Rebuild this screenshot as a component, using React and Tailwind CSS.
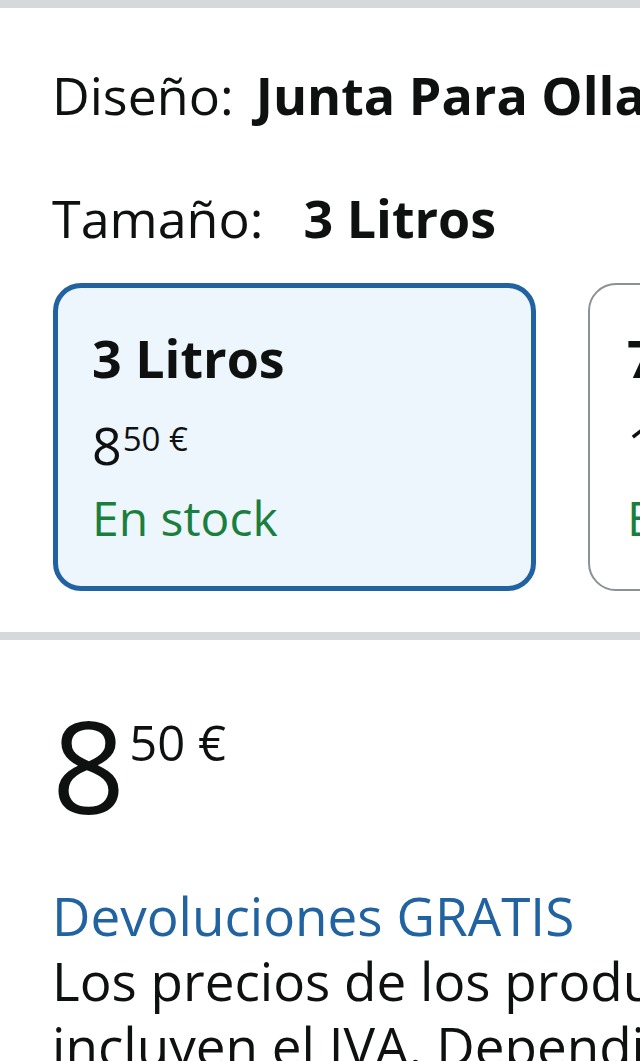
const Price = ({ whole, cents, big }) => {
  if (big) {
    return (
      <div className="flex items-start">
        <span className="text-[128px] leading-[128px]">{whole}</span>
        <span className="mt-[17px] ml-[4px] text-[49px] leading-[48px]">{cents} €</span>
      </div>
    );
  }
  return (
    <div className="flex items-start">
      <span className="text-[52px] leading-[60px]">{whole}</span>
      <span className="ml-[1px] text-[33px] leading-[48px]">{cents} €</span>
    </div>
  );
};

const SizeCard = ({ label, whole, cents, selected }) => (
  <div
    className={
      selected
        ? 'w-[483px] h-[308px] shrink-0 rounded-[28px] border-[5px] border-[#2162a1] bg-[#edf5fd] pl-[34px] pt-[40px]'
        : 'w-[483px] h-[308px] shrink-0 rounded-[28px] border-2 border-[#8d9096] bg-white pl-[37px] pt-[43px]'
    }
  >
    <div className="text-[52px] leading-[60px] font-bold whitespace-nowrap">{label}</div>
    <div className="mt-[27px] font-medium">
      <Price whole={whole} cents={cents} />
    </div>
    <div className="mt-[13px] text-[48px] leading-[60px] font-medium text-[#1a7f3c] whitespace-nowrap">En stock</div>
  </div>
);

export default function App() {
  return (
    <div
      className="w-[640px] h-[1061px] overflow-hidden bg-white text-[#0f1111]"
      style={{ fontFamily: '"Open Sans", "Noto Sans", sans-serif' }}
    >
      <div className="h-2 bg-[#d5d9d9]" />

      <div className="pl-[52px] pt-[57px] pb-[35px]">
        <div className="text-[52px] leading-[60px] font-medium whitespace-nowrap">
          Diseño:
          <span className="ml-[22px] font-bold">Junta Para Ollas Express</span>
        </div>
        <div className="mt-[63px] text-[52px] leading-[60px] font-medium whitespace-nowrap">
          Tamaño:
          <span className="ml-[40px] font-bold">3 Litros</span>
        </div>
      </div>

      <div className="flex gap-[52px] pl-[53px] whitespace-nowrap">
        <SizeCard label="3 Litros" whole="8" cents="50" selected />
        <SizeCard label="7 Litros" whole="12" cents="90" />
      </div>

      <div className="mt-[41px] h-2 bg-[#d5d9d9]" />

      <div className="pl-[52px] font-medium">
        <div className="mt-[61px]">
          <Price whole="8" cents="50" big />
        </div>
        <div className="mt-[54px] text-[53px] leading-[65px] whitespace-nowrap">
          <div className="text-[#2162a1]">Devoluciones GRATIS</div>
          <div>Los precios de los productos vendidos por Amazon</div>
          <div>incluyen el IVA. Dependiendo de tu dirección de</div>
        </div>
      </div>
    </div>
  );
}
